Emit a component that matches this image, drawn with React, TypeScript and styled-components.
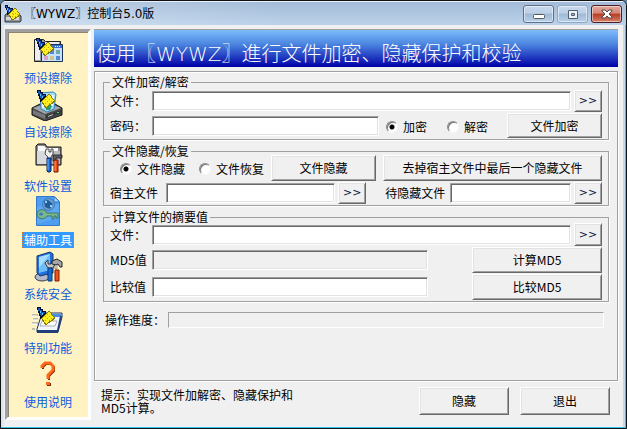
import React from "react";
import styled, { createGlobalStyle, css } from "styled-components";

const GlobalStyle = createGlobalStyle`
  * { box-sizing: border-box; }
  body {
    margin: 0;
    background: #5d7f9c;
    font: 12px/14px "Noto Sans CJK SC", sans-serif;
    color: #000;
  }
  button, input { font: inherit; color: inherit; }
`;

const raised = css`
  border: 1px solid;
  border-color: #fff #696969 #696969 #fff;
  box-shadow: inset 1px 1px 0 #e3e3e3, inset -1px -1px 0 #a0a0a0;
`;

const Window = styled.div`
  display: flex;
  flex-direction: column;
  min-height: 100vh;
  background: #f0f0f0;
  border: 1px solid #111;
  border-radius: 6px 6px 0 0;
  box-shadow: inset -1px -1px 0 #35c4ec, inset 1px 0 0 #cfe3f7, inset 3px 0 0 #dce8f5, inset -3px 0 0 #c3d9f0;
  overflow: hidden;
`;

const TitleBar = styled.header`
  display: flex;
  align-items: center;
  height: 24px;
  padding: 0 4px 0 3px;
  border-top: 1px solid #e8f1fb;
  background: linear-gradient(90deg, rgba(255, 255, 255, 0.3), rgba(255, 255, 255, 0) 45%),
    linear-gradient(#a3bbd8, #bcd2ea);
`;

const Title = styled.h1`
  flex: 1;
  margin: 0;
  padding-left: 2px;
  font: 12px/20px "DejaVu Sans", "Noto Sans CJK SC", sans-serif;
`;

const WindowButtons = styled.div`
  display: flex;
  gap: 3px;
`;

const WindowButton = styled.button<{ $kind: "normal" | "dim" | "close" }>`
  display: grid;
  place-items: center;
  width: 31px;
  height: 18px;
  padding: 0;
  border-radius: 3px;
  border: 1px solid ${(p) => (p.$kind === "close" ? "#4d1c24" : p.$kind === "dim" ? "#8fa8c4" : "#5c708c")};
  box-shadow: inset 0 0 0 1px rgba(255, 255, 255, 0.5);
  background: ${(p) =>
    p.$kind === "close"
      ? "linear-gradient(#e3a99c 0, #d48575 45%, #b93a22 50%, #d3816a)"
      : "linear-gradient(#c8d9ec 0, #bccfe5 45%, #9fb9d5 50%, #b9d0e9)"};
`;

const Client = styled.div`
  display: flex;
  flex: 1;
  gap: 3px;
  padding: 4px 8px 8px 4px;
`;

const Sidebar = styled.nav`
  flex: none;
  width: 86px;
  padding: 2px 0;
  background: #fff3c3;
  border: 3px solid;
  border-color: #a0a0a0 #fff #fff #a0a0a0;
  box-shadow: inset 1px 1px 0 #8a867a;
`;

const NavItem = styled.button`
  display: flex;
  flex-direction: column;
  align-items: center;
  width: 100%;
  height: 54px;
  padding: 0;
  border: 0;
  background: none;
  color: #0a5be0;
`;

const NavLabel = styled.span<{ $active: boolean }>`
  margin-top: 3px;
  padding: 0 1px;
  line-height: 14px;
  border: 1px dotted ${(p) => (p.$active ? "#d9761c" : "transparent")};
  background: ${(p) => (p.$active ? "#3399ff" : "none")};
  color: ${(p) => (p.$active ? "#fff" : "inherit")};
`;

const Main = styled.main`
  flex: 1;
  min-width: 0;
  display: flex;
  flex-direction: column;
  gap: 4px;
`;

const Banner = styled.h2`
  margin: 0;
  padding: 6px 2px 0;
  height: 38px;
  color: #fff;
  background: linear-gradient(#7cbcfc, #4c86e0 38%, #0000a8);
  border-top: 1px solid #a0a0a0;
  font: 300 20px/36px "DejaVu Sans", "Noto Sans CJK SC", sans-serif;
  white-space: nowrap;
`;

const Panel = styled.form`
  flex: 1;
  display: flex;
  flex-direction: column;
  gap: 7px;
  padding: 6px 8px;
  border: 1px solid #a0a0a0;
  box-shadow: 1px 1px 0 #fff, inset 1px 1px 0 #fff;
`;

const Group = styled.fieldset<{ $top?: number }>`
  display: flex;
  flex-direction: column;
  gap: 1px;
  min-width: 0;
  margin: 0;
  padding: ${(p) => p.$top ?? 0}px 6px 1px;
  border: 1px solid #a0a0a0;
  box-shadow: 1px 1px 0 #fff;
`;

const Legend = styled.legend`
  height: 8px;
  padding: 0 2px;
  line-height: 8px;
`;

const Row = styled.div<{ $gap?: number; $indent?: number }>`
  display: flex;
  align-items: center;
  gap: ${(p) => p.$gap ?? 3}px;
  padding-left: ${(p) => p.$indent ?? 0}px;
`;

const Caption = styled.label<{ $width?: number }>`
  flex: none;
  width: ${(p) => (p.$width ? p.$width + "px" : "auto")};
  white-space: nowrap;
`;

const Field = styled.div<{ $grow?: number }>`
  display: flex;
  align-items: center;
  flex: ${(p) => p.$grow ?? 1} 1 0;
  min-width: 0;
`;

const TextBox = styled.input`
  flex: 1;
  min-width: 0;
  width: 100%;
  height: 20px;
  padding: 0 3px;
  border: 1px solid;
  border-color: #a0a0a0 #fff #fff #a0a0a0;
  box-shadow: inset 1px 1px 0 #696969, inset -1px -1px 0 #e3e3e3;
  outline: 0;
  background: #fff;
  &:read-only { background: #f0f0f0; }
`;

const Button = styled.button<{ $width?: number; $height: number }>`
  ${raised}
  flex: ${(p) => (p.$width ? "none" : "1")};
  width: ${(p) => (p.$width ? p.$width + "px" : "auto")};
  height: ${(p) => p.$height}px;
  padding: 0;
  background: #f0f0f0;
  white-space: nowrap;
`;

const Browse = styled(Button)`
  font-family: "DejaVu Sans", sans-serif;
  font-size: 11px;
  color: #0b1636;
`;

const RadioLabel = styled.label`
  display: flex;
  align-items: center;
  gap: 5px;
  white-space: nowrap;
`;

const Radio = styled.input`
  appearance: none;
  width: 12px;
  height: 12px;
  margin: 0;
  border: 1px solid;
  border-color: #888 #f6f6f6 #f6f6f6 #888;
  border-radius: 50%;
  background: #fff;
  box-shadow: inset 1px 1px 0 #777;
  &:checked { background: radial-gradient(circle, #000 2px, #fff 3px); }
`;

const RadioSet = styled.div<{ $gap: number; $after?: number }>`
  display: flex;
  gap: ${(p) => p.$gap}px;
  padding-top: 2px;
  margin: 0 ${(p) => p.$after ?? 4}px 0 4px;
`;

const Digest = styled.div`
  display: grid;
  grid-template-columns: 1fr 130px;
  grid-auto-rows: 26px;
  gap: 1px 44px;
  align-items: center;
`;

const ProgressRow = styled(Row)`
  padding: 3px 5px 0 2px;
`;

const ProgressBar = styled.div`
  flex: 1;
  height: 16px;
  border: 1px solid;
  border-color: #a0a0a0 #fff #fff #a0a0a0;
`;

const Footer = styled.footer`
  display: flex;
  align-items: center;
  gap: 11px;
  padding: 2px 8px 5px 7px;
`;

const Hint = styled.p`
  flex: 1;
  margin: 0;
  line-height: 13px;
`;

const HintText = styled.span`
  display: block;
  max-width: 204px;
`;

const Broom = ({ x = 0, y = 0 }: { x?: number; y?: number }) => (
  <g transform={`translate(${x} ${y})`} shapeRendering="crispEdges">
    <path d="M0 0h4v2h2v2h3v3l-4 5H3V9H2V6H1V3H0z" fill="#06102c" />
    <path d="M1 1h2v2h2v2h3l-4 4-1-2V4H1z" fill="#1558c4" />
    <path d="M3 4h1v2H3zM5 6h1v2H5z" fill="#5cc0f4" />
    <path d="M4 11l8-8 6 8v1l-9 6H8z" fill="#857800" />
    <path d="M5 11l7-7 5 7-8 6z" fill="#ffee22" />
    <path
      d="M8 9h1v1H8zM10 7h1v1h-1zM12 9h1v1h-1zM10 11h1v1h-1zM8 13h1v1H8zM12 13h1v1h-1zM14 11h1v1h-1z"
      fill="#c4a800"
    />
  </g>
);

const AppIcon = () => (
  <svg width="18" height="18" viewBox="0 0 18 18" aria-hidden="true">
    <path d="M1 10l3-2h9l4 3v5l-1 1H1z" fill="#8f9398" stroke="#33363a" />
    <path d="M2 12h13v3H2z" fill="#d7d9db" />
    <g transform="scale(.86)"><Broom x={1} y={0} /></g>
  </svg>
);

const PresetIcon = () => (
  <>
    <path d="M3.500 5.500h9l2 2h15v4h-19v16h-7z" fill="#9a9a9e" stroke="#222" />
    <path d="M4 6h5v20H4z" fill="#ededf0" />
    <path d="M12 8h16v2H12z" fill="#ececec" />
    <path d="M10.500 10.500h21v17h-21z" fill="#c4e2fb" stroke="#1c3155" />
    <path d="M11 11h20v3H11z" fill="#3871cf" />
    <path d="M24 12h1v1h-1zM26 12h1v1h-1zM28 12h1v1h-1z" fill="#fff" />
    <path d="M19 16h4v4h-4zM25 22h4v4h-4z" fill="#5587d8" />
    <path d="M25 16h4v4h-4z" fill="#74a5b0" />
    <path d="M13 22h4v4h-4z" fill="#db9fc8" />
    <path d="M19 22h4v4h-4z" fill="#d3c488" />
    <Broom x={5} y={4} />
  </>
);

const CustomIcon = () => (
  <>
    <path d="M1 20l8-4h15l7 4v7l-17 6-13-6z" fill="#4c4c4f" stroke="#161616" />
    <path d="M2 20l8-3h13l7 3-16 6z" fill="#a3a4a7" />
    <path d="M2 22l12 5v4L2 26z" fill="#77787b" />
    <path d="M15 27l15-5v3l-15 6z" fill="#38393b" />
    <path d="M17 28l5-2v1l-5 2z" fill="#c9cacc" />
    <path d="M26 24h2v1h-2z" fill="#42d45e" />
    <path d="M9 5l13-1 3 2-2 15-7 3-6-3z" fill="#a8dcf7" stroke="#2f83bd" />
    <path d="M11 7h2v13h-2zM21 7h2l-1 11h-2z" fill="#e9f8ff" />
    <path d="M15 18l3-2 3 2-2 4h-4z" fill="#2e9a67" />
    <Broom x={6} y={2} />
  </>
);

const SettingsIcon = () => (
  <>
    <path d="M5 4l2-2h7l2 3h14v18H5z" fill="#8d8d92" stroke="#111" />
    <path d="M7 4h6l2 2h12v3H7z" fill="#fafafa" />
    <path d="M6 9h23v13H6z" fill="#b9babe" />
    <path d="M6 9h10v13H6z" fill="#d8d9dc" />
    <path d="M15 7h3v3h2V7h2v5l-2 3v3h-3v-3l-3-3z" fill="#eee" stroke="#26262a" strokeWidth=".8" />
    <path d="M22 13h9v3h-6v3h-3z" fill="#5d5e62" stroke="#17171a" strokeWidth=".8" />
    <path d="M16 16h4v13l-1 1h-2l-1-1z" fill="#1764dd" stroke="#082456" />
    <path d="M23 18h4v12h-4z" fill="#ee4b16" stroke="#6d1d09" />
    <path d="M17 17v11" stroke="#70bcff" /><path d="M24 19v10" stroke="#ff9466" />
  </>
);

const ToolsIcon = () => (
  <>
    <path d="M5.500 .5h18l5 5v24h-23z" fill="#4f9df0" stroke="#3377c8" />
    <path d="M23 1v5h5" fill="#a8d5ff" stroke="#347acc" />
    <path d="M6 11l22-3v13l-22 7z" fill="#65acf4" opacity=".7" />
    <circle cx="17.500" cy="8.500" r="6" fill="#6e9fcd" stroke="#3d79b8" />
    <path d="M13 5l4-1 5 4-3 5-5-2z" fill="#225a9c" />
    <path d="M14 5h2v2h-2zM19 9h2v2h-2z" fill="#83d3f8" />
    <path d="M6 18c0-5 8-6 10-1h11v5h-2v-2h-2v3h-2v-3h-5c-2 4-10 4-10-2z" fill="#79b68d" stroke="#407962" />
    <ellipse cx="10" cy="18" rx="2" ry="1.500" fill="#417ac1" />
  </>
);

const SecurityIcon = () => (
  <>
    <ellipse cx="11" cy="27" rx="7" ry="4" fill="#b4bac7" stroke="#343b50" />
    <path d="M6 6l13-4 3 2v19l-13 3-3-3z" fill="#236ed9" stroke="#17396f" />
    <path d="M8 7l11-3v16L8 23z" fill="#6ebcf8" />
    <path d="M8 7l11-3L8 18z" fill="#a7defe" />
    <path d="M14 13l3-3v4h3l1-3 3 3-2 4h-5z" fill="#c7c8cc" stroke="#39393e" />
    <path d="M21 11l5-2 5 3v5h-2l-2-3-2 1-4-1z" fill="#a6a7aa" stroke="#222" />
    <path d="M17 18h4v13h-4z" fill="#146ed7" stroke="#083976" />
    <path d="M24 15h2v4h-2z" fill="#e7e7e7" stroke="#444" strokeWidth=".5" />
    <path d="M24 20h4v11h-4z" fill="#ef541d" stroke="#76200b" />
  </>
);

const SpecialIcon = () => (
  <>
    <path d="M11 9h20v4l-4 15H6v-3z" fill="#f1f6fc" stroke="#1c3563" />
    <path d="M12 10h19l-1 3H11z" fill="#4a8de1" />
    <path d="M11 17h15l-2 5H9z" fill="#fff" stroke="#aaadb3" />
    <path d="M6 26h20l3-14h2l-4 17H6z" fill="#223e78" />
    <path d="M1 11h6M2 15h5M1 19h6M1 25h3" stroke="#858991" />
    <path d="M1 12h5M2 16h5M1 20h5" stroke="#fff" />
    <Broom x={6} y={3} />
  </>
);

const HelpIcon = () => (
  <>
    <path d="M11 10V8l3-3h5l3 3v4l-5 5v4" fill="none" stroke="#7b2a10" strokeWidth="2" transform="translate(1 1)" />
    <path d="M11 10V8l3-3h5l3 3v4l-5 5v4" fill="none" stroke="#ff6a18" strokeWidth="3" />
    <path d="M16 25h4v3h-4z" fill="#7b2a10" /><path d="M15 24h4v3h-4z" fill="#ff6a18" />
  </>
);

const navItems = [
  { label: "预设擦除", Icon: PresetIcon },
  { label: "自设擦除", Icon: CustomIcon },
  { label: "软件设置", Icon: SettingsIcon },
  { label: "辅助工具", Icon: ToolsIcon },
  { label: "系统安全", Icon: SecurityIcon },
  { label: "特别功能", Icon: SpecialIcon },
  { label: "使用说明", Icon: HelpIcon },
];

function RadioOption({ name, label, checked }: { name: string; label: string; checked?: boolean }) {
  return (
    <RadioLabel>
      <Radio type="radio" name={name} defaultChecked={checked} />
      {label}
    </RadioLabel>
  );
}

export default function App() {
  return (
    <>
      <GlobalStyle />
      <Window>
        <TitleBar>
          <AppIcon />
          <Title>〖WYWZ〗控制台5.0版</Title>
          <WindowButtons>
            <WindowButton $kind="normal" aria-label="最小化">
              <svg width="12" height="12"><rect x=".5" y="6.500" width="11" height="4" rx="1" fill="#fff" stroke="#55585f" /></svg>
            </WindowButton>
            <WindowButton $kind="dim" aria-label="最大化">
              <svg width="12" height="12"><path fillRule="evenodd" d="M1.500 2.500h9v8h-9zM4.500 5.500v2h3v-2z" fill="#eef2f7" stroke="#55606f" /></svg>
            </WindowButton>
            <WindowButton $kind="close" aria-label="关闭">
              <svg width="14" height="12"><path d="M2 2h3l2 2 2-2h3v1L9 6l3 3v1H9L7 8l-2 2H2V9l3-3-3-3z" fill="#fff" stroke="#50484c" /></svg>
            </WindowButton>
          </WindowButtons>
        </TitleBar>
        <Client>
          <Sidebar>
            {navItems.map(({ label, Icon }) => (
              <NavItem key={label} type="button">
                <svg width="34" height="33" viewBox="0 0 34 33" aria-hidden="true"><Icon /></svg>
                <NavLabel $active={label === "辅助工具"}>{label}</NavLabel>
              </NavItem>
            ))}
          </Sidebar>
          <Main>
            <Banner>使用〖WYWZ〗進行文件加密、隐藏保护和校验</Banner>
            <Panel>
              <Group $top={4}>
                <Legend>文件加密/解密</Legend>
                <Row>
                  <Field>
                    <Caption $width={42} htmlFor="crypt-file">文件：</Caption>
                    <TextBox id="crypt-file" />
                  </Field>
                  <Browse type="button" $width={28} $height={22}>&gt;&gt;</Browse>
                </Row>
                <Row>
                  <Field>
                    <Caption $width={42} htmlFor="crypt-key">密码：</Caption>
                    <TextBox id="crypt-key" type="password" />
                  </Field>
                  <RadioSet $gap={20} $after={16}>
                    <RadioOption name="crypt" label="加密" checked />
                    <RadioOption name="crypt" label="解密" />
                  </RadioSet>
                  <Button type="button" $width={95} $height={25}>文件加密</Button>
                </Row>
              </Group>

              <Group>
                <Legend>文件隐藏/恢复</Legend>
                <Row $indent={6}>
                  <RadioSet $gap={14}>
                    <RadioOption name="hide" label="文件隐藏" checked />
                    <RadioOption name="hide" label="文件恢复" />
                  </RadioSet>
                  <Row $gap={7}>
                    <Button type="button" $width={105} $height={26}>文件隐藏</Button>
                  </Row>
                  <Field>
                    <Row $indent={4} />
                    <Button type="button" $height={26}>去掉宿主文件中最后一个隐藏文件</Button>
                  </Field>
                </Row>
                <Row>
                  <Caption $width={53} htmlFor="host-file">宿主文件</Caption>
                  <Field $grow={7}><TextBox id="host-file" /></Field>
                  <Browse type="button" $width={28} $height={22}>&gt;&gt;</Browse>
                  <Row $indent={16}><Caption $width={62} htmlFor="hidden-file">待隐藏文件</Caption></Row>
                  <Field $grow={5}><TextBox id="hidden-file" /></Field>
                  <Browse type="button" $width={28} $height={22}>&gt;&gt;</Browse>
                </Row>
              </Group>

              <Group $top={2}>
                <Legend>计算文件的摘要值</Legend>
                <Row>
                  <Field>
                    <Caption $width={42} htmlFor="digest-file">文件：</Caption>
                    <TextBox id="digest-file" />
                  </Field>
                  <Browse type="button" $width={28} $height={23}>&gt;&gt;</Browse>
                </Row>
                <Digest>
                  <Field>
                    <Caption $width={42} htmlFor="md5">MD5值</Caption>
                    <TextBox id="md5" readOnly />
                  </Field>
                  <Button type="button" $height={26}>计算MD5</Button>
                  <Field>
                    <Caption $width={42} htmlFor="compare">比较值</Caption>
                    <TextBox id="compare" />
                  </Field>
                  <Button type="button" $height={26}>比较MD5</Button>
                </Digest>
              </Group>

              <ProgressRow>
                <Caption id="progress-label" as="span" $width={60}>操作進度：</Caption>
                <ProgressBar role="progressbar" aria-labelledby="progress-label" aria-valuenow={0} />
              </ProgressRow>
            </Panel>
            <Footer>
              <Hint><HintText>提示：实现文件加解密、隐藏保护和MD5计算。</HintText></Hint>
              <Button type="button" $width={90} $height={28}>隐藏</Button>
              <Button type="button" $width={90} $height={28}>退出</Button>
            </Footer>
          </Main>
        </Client>
      </Window>
    </>
  );
}
